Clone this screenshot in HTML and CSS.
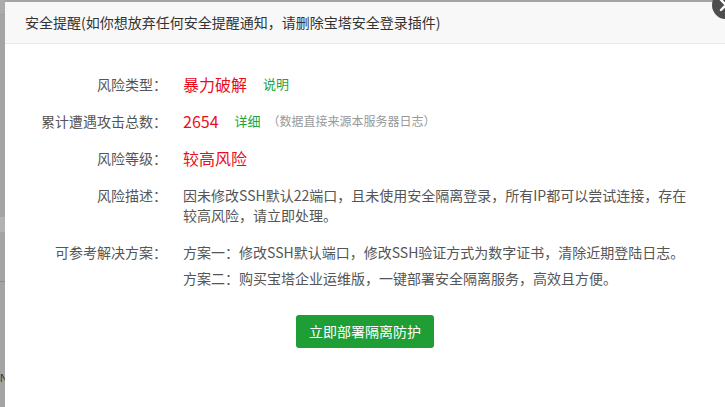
FILE: index.html
```html
<!DOCTYPE html>
<html lang="zh-CN">
<head>
<meta charset="utf-8">
<title>安全提醒</title>
<link rel="stylesheet" href="styles.css">
</head>
<body>
<div class="backdrop"><span class="bg-letter">N</span></div>
<div class="dialog">
  <div class="dialog-head">安全提醒(如你想放弃任何安全提醒通知，请删除宝塔安全登录插件)</div>
  <a class="close" aria-label="关闭"><svg viewBox="0 0 28 28" width="28" height="28"><path d="M9 9 L19 19 M19 9 L9 19" stroke="#fff" stroke-width="2.4" stroke-linecap="round"/></svg></a>
  <div class="dialog-body">
    <div class="rows">
      <div class="label">风险类型：</div>
      <div class="value"><span class="red big">暴力破解</span><a class="link">说明</a></div>

      <div class="label">累计遭遇攻击总数：</div>
      <div class="value"><span class="red big">2654</span><a class="link">详细</a><span class="note">（数据直接来源本服务器日志）</span></div>

      <div class="label">风险等级：</div>
      <div class="value"><span class="red big">较高风险</span></div>

      <div class="label">风险描述：</div>
      <div class="value desc">因未修改SSH默认22端口，且未使用安全隔离登录，所有IP都可以尝试连接，存在较高风险，请立即处理。</div>

      <div class="label">可参考解决方案：</div>
      <div class="value plans">
        <p>方案一：修改SSH默认端口，修改SSH验证方式为数字证书，清除近期登陆日志。</p>
        <p>方案二：购买宝塔企业运维版，一键部署安全隔离服务，高效且方便。</p>
      </div>
    </div>
    <div class="actions"><button class="btn">立即部署隔离防护</button></div>
  </div>
</div>
</body>
</html>
```

FILE: styles.css
```css
html, body {
  margin: 0;
  padding: 0;
  width: 725px;
  height: 407px;
  overflow: hidden;
}
body {
  position: relative;
  background: #a4a4a4;
  font-family: "Noto Sans CJK SC", "Microsoft YaHei", sans-serif;
  padding-top: 2px;
  box-sizing: border-box;
}
.backdrop {
  position: absolute;
  left: 0;
  top: 0;
  width: 5px;
  height: 407px;
  background: linear-gradient(to bottom,
    #ababab 0, #ababab 14px, #9c9c9c 14px, #a4a4a4 15px,
    #a4a4a4 217px, #b2b2b2 217px, #b2b2b2 232px, #a4a4a4 232px,
    #a4a4a4 281px, #8f8f8f 281px, #8f8f8f 282px, #a4a4a4 282px);
}
.bg-letter {
  position: absolute;
  left: 0;
  top: 372px;
  font-family: "Liberation Sans", sans-serif;
  font-size: 11px;
  line-height: 12px;
  color: #333;
}
.dialog {
  position: relative;
  margin-left: 5px;
  width: 720px;
  height: 405px;
  background: #fff;
}
.dialog-head {
  height: 41px;
  line-height: 41px;
  padding-left: 20px;
  background: #f8f8f8;
  border-bottom: 1px solid #eaeaea;
  font-size: 14px;
  color: #333;
}
.close {
  position: absolute;
  right: -15px;
  top: -11px;
  width: 28px;
  height: 28px;
  border-radius: 50%;
  background: #4e4e4e;
  display: block;
}
.close svg { display: block; }
.dialog-body {
  padding-top: 30px;
}
.rows {
  display: grid;
  grid-template-columns: 162px 508px;
  column-gap: 16px;
  row-gap: 17px;
  font-size: 14px;
  line-height: 20px;
}
.label {
  text-align: right;
  color: #555;
}
.value {
  color: #555;
  display: flex;
  align-items: center;
}
.red { color: #ea0e1c; }
.big { font-size: 16px; }
.link {
  color: #20a53a;
  font-size: 13px;
  margin-left: 16px;
  cursor: pointer;
}
.note {
  color: #999;
  font-size: 12px;
  margin-left: 7px;
}
.desc { display: block; }
.plans {
  display: flex;
  flex-direction: column;
  align-items: flex-start;
  gap: 6px;
}
.plans p { margin: 0; }
.actions {
  display: flex;
  justify-content: center;
  padding-top: 27px;
}
.btn {
  height: 33px;
  padding: 0 13px;
  border: 0;
  border-radius: 3px;
  background: #1f9e36;
  color: #fff;
  font-family: "Noto Sans CJK SC", "Microsoft YaHei", sans-serif;
  font-size: 14px;
  line-height: 33px;
}
```
